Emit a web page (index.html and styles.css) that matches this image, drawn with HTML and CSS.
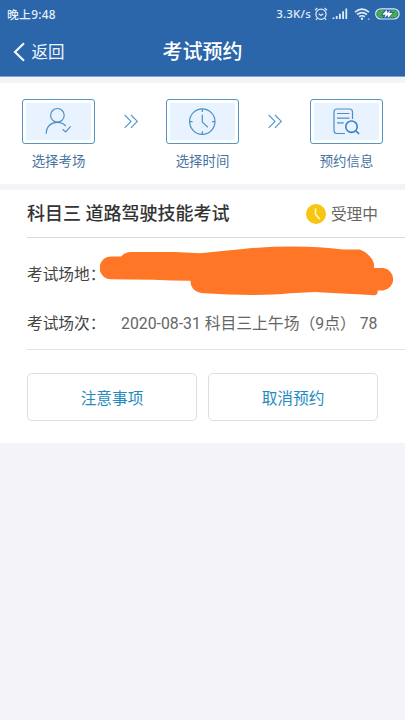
FILE: index.html
```
<!DOCTYPE html>
<html lang="zh-CN">
<head>
<meta charset="utf-8">
<title>考试预约</title>
<link rel="stylesheet" href="styles.css">
</head>
<body>
<header class="header">
  <div class="status">
    <span class="time">晚上9:48</span>
    <div class="indicators">
      <span class="speed">3.3K/s</span>
      <svg class="alarm" width="14" height="14" viewBox="0 0 14 14"><circle cx="7" cy="7.3" r="5.1"/><path d="M1 3.2 3.4 1M10.6 1 13 3.2M3.3 11.2 2 13M10.7 11.2 12 13M4.7 6.7 7 8.4 9.3 6.7"/></svg>
      <svg class="signal" width="16" height="12" viewBox="0 0 16 12"><path d="M1.5 9.5V11M4.7 8V11M7.9 5.8V11M11.1 3.2V11M14.3.4V11"/></svg>
      <svg class="wifi" width="17" height="13" viewBox="0 0 17 13"><path d="M1 4.1Q8-1.7 15 4.1M3.1 6.5Q8 2.6 12.9 6.5M5.2 8.8Q8 6.7 10.8 8.8"/><circle cx="8" cy="10.8" r="1.2"/><circle class="dot" cx="14.7" cy="11.2" r=".9"/></svg>
      <svg class="battery" width="25" height="12" viewBox="0 0 25 12"><rect class="shell" x=".7" y=".8" width="23.4" height="10.2" rx="5.1"/><path class="charge" d="M9.500 2.300H5.800a3.600 3.600 0 0 0 0 7.200H8V8L5.500 7.500ZM16.500 2.300H19a3.600 3.600 0 0 1 0 7.200H14.500L19.500 4H16Z"/><path class="bolt" d="M11.600 2 7.200 6.800H10.600L9.400 10 12.600 7 13.400 9.800 17.600 5H14.200L15.400 2 12.400 5Z"/></svg>
    </div>
  </div>
  <nav class="navbar">
    <a class="back"><svg width="13" height="20" viewBox="0 0 13 20"><path d="M11 1.2 2 10l9 8.8"/></svg>返回</a>
    <h1>考试预约</h1>
  </nav>
</header>
<section class="steps">
  <div class="step">
    <div class="frame"><svg width="73" height="45" viewBox="0 0 73 45"><circle cx="35.4" cy="16.3" r="6.8"/><path d="M24.2 34.7C24.2 28 28.8 23.4 35 23.4c3.8 0 6.6 1 8.8 3.6M40.5 30.2l3.2 2.7 5-5.5"/></svg></div>
    <span>选择考场</span>
  </div>
  <svg class="arrows" width="14" height="15" viewBox="0 0 14 15"><path d="M.7 1 7 7.4.7 13.8M7 1l6.3 6.4L7 13.8"/></svg>
  <div class="step">
    <div class="frame"><svg width="73" height="45" viewBox="0 0 73 45"><circle cx="36.3" cy="22.6" r="12.7"/><path d="M36.3 9.9v3M36.3 32.3v3M23.6 22.6h3M46 22.6h3M36.3 15.7v7.4l5.6 5.2"/></svg></div>
    <span>选择时间</span>
  </div>
  <svg class="arrows" width="14" height="15" viewBox="0 0 14 15"><path d="M.7 1 7 7.4.7 13.8M7 1l6.3 6.4L7 13.8"/></svg>
  <div class="step">
    <div class="frame"><svg width="73" height="45" viewBox="0 0 73 45"><path d="M35 34.5h-8a3 3 0 0 1-3-3V13a3 3 0 0 1 3-3H39.500a3 3 0 0 1 3 3v7M27 14.5h12.5M27 19.2h12.5M27 23.8h6.8"/><circle class="lens" cx="41.500" cy="27.7" r="5.7"/><path class="lens" d="M45.7 31.8l3.4 3"/></svg></div>
    <span>预约信息</span>
  </div>
</section>
<main class="card">
  <div class="card-head">
    <h2>科目三 道路驾驶技能考试</h2>
    <div class="state"><svg width="20" height="20" viewBox="0 0 20 20"><circle cx="10" cy="10" r="10"/><path d="M9.5 4.5v5.8l4.2 4.8"/></svg>受理中</div>
  </div>
  <div class="rows">
    <div class="row">
      <span class="label">考试场地：</span>
      <svg class="redaction" width="295" height="50" viewBox="100 245.500 295 50"><path d="M111 256H121Q125 251.500 131 251.500H175L200 252.700Q221 250.500 243 248.400Q266 246 293 246Q320 246.200 343 249H359C364 249.500 374 258 374 264V267.500H383A11.300 11.300 0 0 1 383 290H377.700Q378 294.700 374 294.700Q340 293 315 291.500L290 292.800Q275 294.400 255 294.400Q230 294.500 205 292.800C196 293 190.500 288 190.500 280.300Q172 280 153 279.200L111 278.700A11.300 11.300 0 0 1 111 256Z"/></svg>
    </div>
    <div class="row">
      <span class="label">考试场次：</span>
      <span class="value">2020-08-31 科目三上午场（9点） 78</span>
    </div>
  </div>
  <div class="actions"><button>注意事项</button><button>取消预约</button></div>
</main>
</body>
</html>
```
FILE: styles.css
```
* { box-sizing: border-box; }
body {
  margin: 0;
  min-height: 720px;
  background: #f3f3f8;
  font-family: Roboto, "Noto Sans CJK SC", sans-serif;
  color: #444;
}
svg { display: block; flex: none; fill: none; }
h1, h2 { margin: 0; font-weight: 500; }
.header {
  height: 77px;
  background: #2b65aa;
  border-bottom: 1px solid #7fa1cf;
  color: #fff;
}
.status {
  height: 28px;
  padding: 0 5px 0 7px;
  display: flex;
  align-items: center;
  justify-content: space-between;
  color: #e4effb;
  font-family: "Noto Sans", "Noto Sans CJK SC", sans-serif;
  font-size: 11.8px;
  font-weight: 500;
  white-space: nowrap;
}
.time { letter-spacing: .3px; margin-top: -1px; }
.speed { font-size: 11.5px; letter-spacing: .2px; margin: -2px 3px 0 0; }
.indicators { display: flex; align-items: center; }
.indicators svg { stroke: #dcebfa; }
.alarm { stroke-width: 1.2; margin-right: 4px; }
.signal { stroke-width: 1.8; margin-right: 6px; }
.wifi { stroke-width: 1.7; margin-right: 4px; }
.wifi circle { fill: #dcebfa; stroke: none; }
.wifi .dot { fill: #8fb3dc; }
.battery { margin-top: -1px; }
.battery .shell { stroke-width: 1.2; }
.indicators .charge { fill: #46b13c; stroke: none; }
.indicators .bolt { fill: #fff; stroke: none; }
.navbar {
  height: 48px;
  padding: 0 13px;
  display: grid;
  grid-template-columns: 1fr auto 1fr;
  align-items: center;
}
.back { display: flex; align-items: center; gap: 5.5px; font-size: 16.5px; line-height: 22px; padding-top: 1px; color: #edf5fd; }
.back svg { stroke: #edf5fd; stroke-width: 2.2; margin-top: -1px; }
h1 { font-size: 20px; line-height: 28px; }
.steps {
  height: 101px;
  margin-top: 6px;
  padding: 16px 22px 0;
  background: #fff;
  display: flex;
  justify-content: space-between;
}
.step { width: 73px; display: flex; flex-direction: column; align-items: center; }
.frame {
  width: 73px;
  height: 45px;
  border: 1px solid #5794c3;
  border-radius: 3px;
  padding: 3px;
  background: #e8f3ff content-box;
}
.frame svg { margin: -4px; stroke: #4d8fc5; stroke-width: 1.2; }
.frame .lens { stroke: #3c80bc; stroke-width: 1.6; }
.step span { margin-top: 8px; font-size: 13.4px; line-height: 20px; color: #47749f; white-space: nowrap; }
.arrows { margin-top: 15px; stroke: #579acb; stroke-width: 1.2; }
.card { height: 253px; margin-top: 6px; padding-left: 27px; background: #fff; }
.card-head {
  height: 48px;
  padding-right: 27px;
  border-bottom: 1px solid #dadada;
  display: flex;
  align-items: center;
  justify-content: space-between;
}
h2 { font-size: 18px; line-height: 26px; color: #333; white-space: nowrap; }
.state { display: flex; align-items: center; gap: 5px; font-size: 15.7px; color: #666; }
.state circle { fill: #f8c512; }
.state path { stroke: #fff5bd; stroke-width: 1.7; }
.rows { height: 112px; padding-top: 12px; border-bottom: 1px solid #e2e2e2; }
.row { height: 49px; display: flex; align-items: center; white-space: nowrap; font-size: 15.7px; line-height: 24px; }
.label { width: 73px; flex: none; color: #444; }
.value { margin-left: 21px; color: #666; font-size: 15.8px; }
.redaction { fill: #ff7626; margin-top: -7px; }
.actions { padding: 23px 27px 0 0; display: flex; gap: 11px; }
button {
  flex: 1;
  height: 48px;
  border: 1px solid #dedede;
  border-radius: 5px;
  background: #fff;
  color: #248bc1;
  font: inherit;
  font-size: 15.7px;
}
```
